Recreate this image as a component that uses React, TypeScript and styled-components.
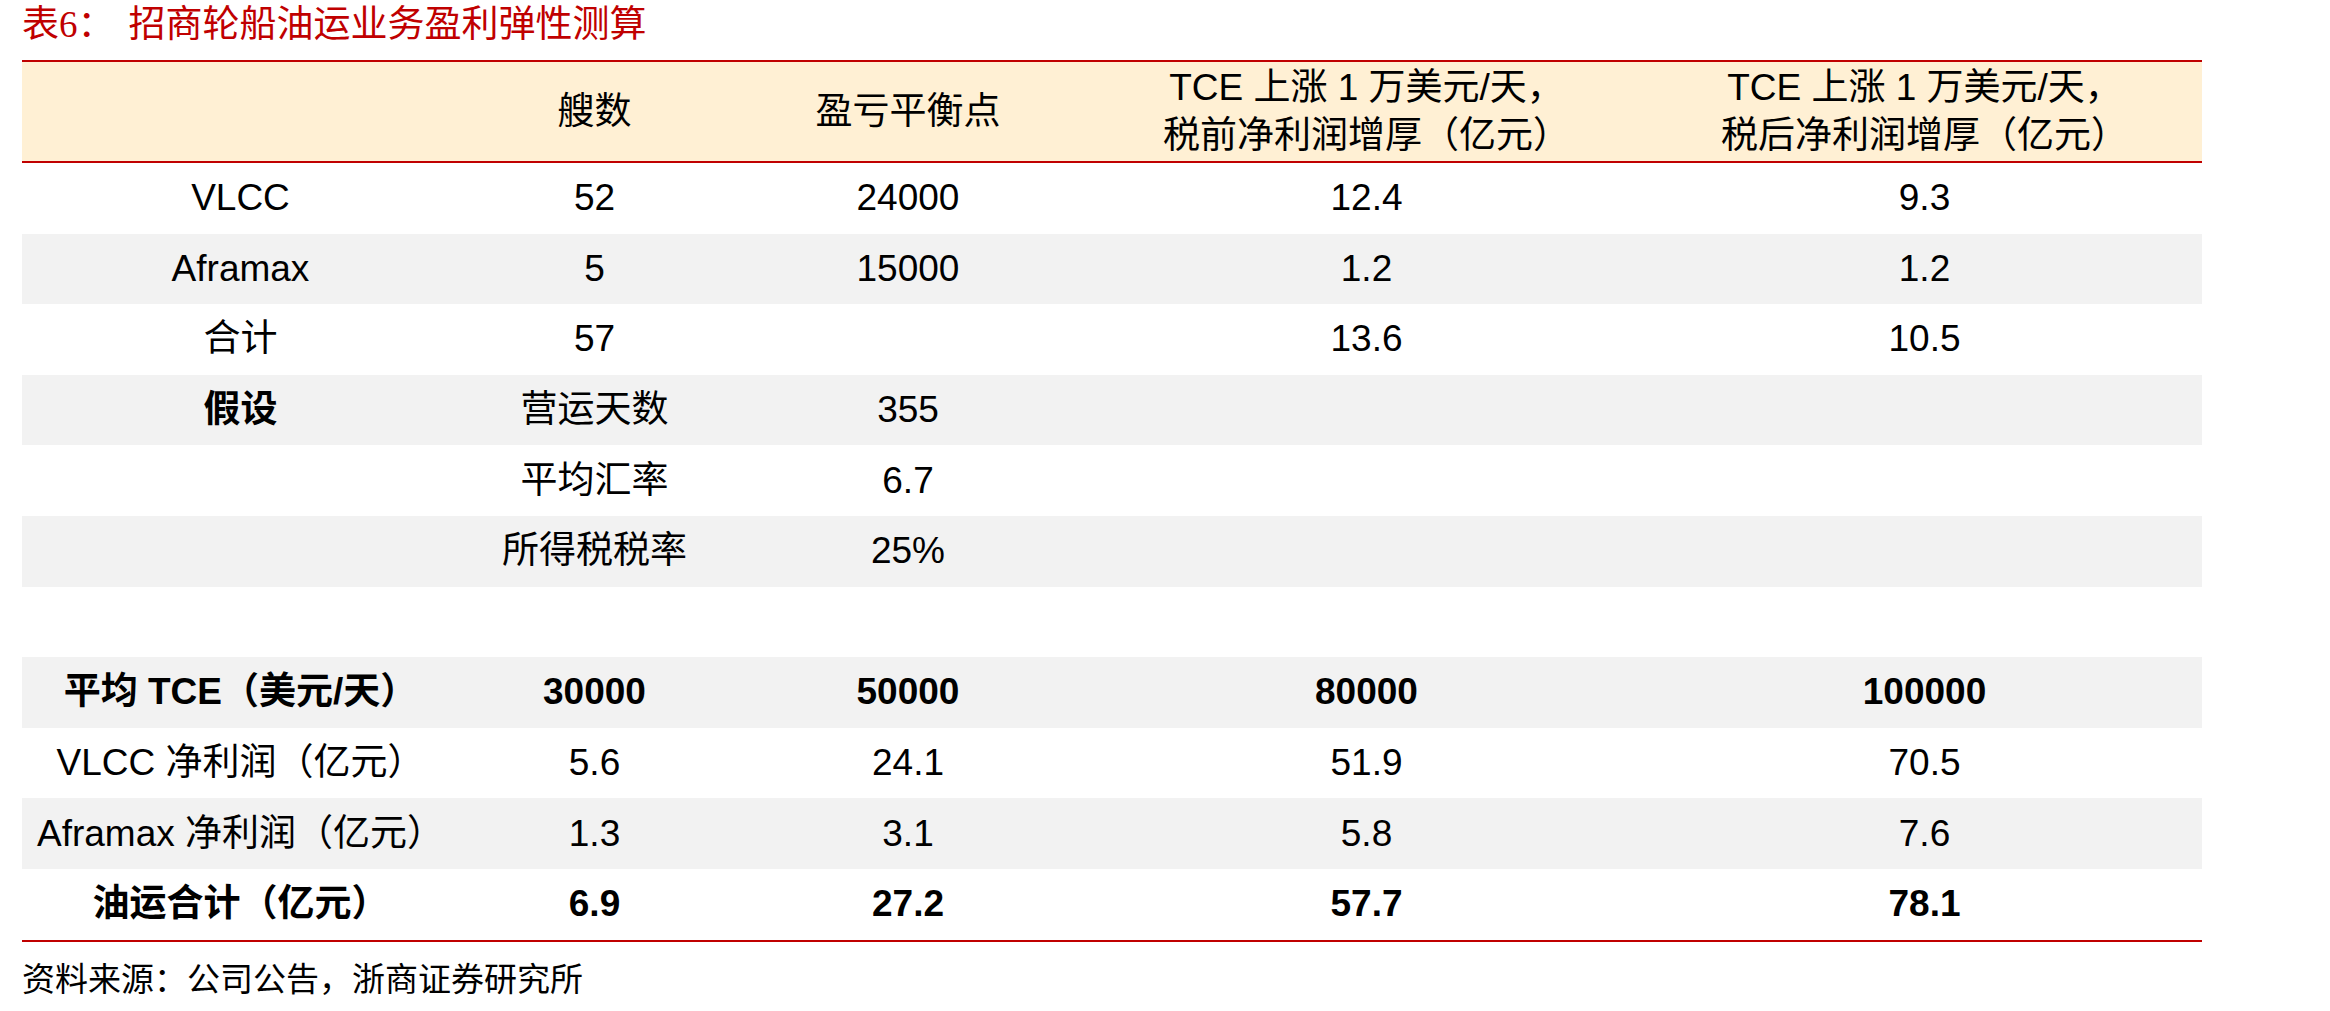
import React from "react";
import styled, { createGlobalStyle } from "styled-components";

const GlobalStyle = createGlobalStyle`
  html, body {
    margin: 0;
    padding: 0;
    background: #ffffff;
  }
  body {
    font-family: "Liberation Sans", "Noto Sans CJK SC", sans-serif;
    color: #000000;
  }
`;

const RED = "#c00000";
const COLS = "437px 271px 356px 561px 555px";

const Page = styled.div`
  padding-left: 22px;
  width: 2180px;
`;

const Title = styled.div`
  height: 60px;
  display: flex;
  align-items: center;
  padding-bottom: 10px;
  box-sizing: border-box;
  color: ${RED};
  font-family: "Liberation Serif", "Noto Sans CJK SC", serif;
  font-size: 37px;
  line-height: 50px;
  white-space: nowrap;
`;

const TitleLabel = styled.span`
  margin-right: 14px;
`;

const Table = styled.div`
  display: flex;
  flex-direction: column;
  border-bottom: 2px solid ${RED};
`;

const HeaderRow = styled.div`
  display: grid;
  grid-template-columns: ${COLS};
  height: 103px;
  box-sizing: border-box;
  background: #fff0d4;
  border-top: 2px solid ${RED};
  border-bottom: 2px solid ${RED};
`;

const HeaderCell = styled.div`
  display: flex;
  align-items: center;
  justify-content: center;
  text-align: center;
  font-size: 37px;
  line-height: 48px;
  white-space: nowrap;
`;

const Row = styled.div<{ $shade?: boolean }>`
  display: grid;
  grid-template-columns: ${COLS};
  height: 70.6px;
  background: ${(p) => (p.$shade ? "#f2f2f2" : "#ffffff")};
`;

const Cell = styled.div<{ $bold?: boolean }>`
  display: flex;
  align-items: center;
  justify-content: center;
  font-size: 37px;
  line-height: 40px;
  font-weight: ${(p) => (p.$bold ? 700 : 400)};
  white-space: nowrap;
`;

const Source = styled.div`
  padding-top: 18px;
  font-size: 33px;
  line-height: 40px;
  color: #000000;
  white-space: nowrap;
`;

type RowData = {
  cells: string[];
  shade?: boolean;
  bold?: boolean;
  boldFirst?: boolean;
};

const rows: RowData[] = [
  { cells: ["VLCC", "52", "24000", "12.4", "9.3"] },
  { cells: ["Aframax", "5", "15000", "1.2", "1.2"], shade: true },
  { cells: ["合计", "57", "", "13.6", "10.5"] },
  { cells: ["假设", "营运天数", "355", "", ""], shade: true, boldFirst: true },
  { cells: ["", "平均汇率", "6.7", "", ""] },
  { cells: ["", "所得税税率", "25%", "", ""], shade: true },
  { cells: ["", "", "", "", ""] },
  {
    cells: ["平均 TCE（美元/天）", "30000", "50000", "80000", "100000"],
    shade: true,
    bold: true,
  },
  { cells: ["VLCC 净利润（亿元）", "5.6", "24.1", "51.9", "70.5"] },
  {
    cells: ["Aframax 净利润（亿元）", "1.3", "3.1", "5.8", "7.6"],
    shade: true,
  },
  { cells: ["油运合计（亿元）", "6.9", "27.2", "57.7", "78.1"], bold: true },
];

export default function App() {
  return (
    <>
      <GlobalStyle />
      <Page>
        <Title>
          <TitleLabel>表6：</TitleLabel>
          <span>招商轮船油运业务盈利弹性测算</span>
        </Title>
        <Table>
          <HeaderRow>
            <HeaderCell />
            <HeaderCell>艘数</HeaderCell>
            <HeaderCell>盈亏平衡点</HeaderCell>
            <HeaderCell>
              TCE 上涨 1 万美元/天，
              <br />
              税前净利润增厚（亿元）
            </HeaderCell>
            <HeaderCell>
              TCE 上涨 1 万美元/天，
              <br />
              税后净利润增厚（亿元）
            </HeaderCell>
          </HeaderRow>
          {rows.map((r, i) => (
            <Row key={i} $shade={r.shade}>
              {r.cells.map((c, j) => (
                <Cell key={j} $bold={r.bold || (r.boldFirst && j === 0)}>
                  {c}
                </Cell>
              ))}
            </Row>
          ))}
        </Table>
        <Source>资料来源：公司公告，浙商证券研究所</Source>
      </Page>
    </>
  );
}
